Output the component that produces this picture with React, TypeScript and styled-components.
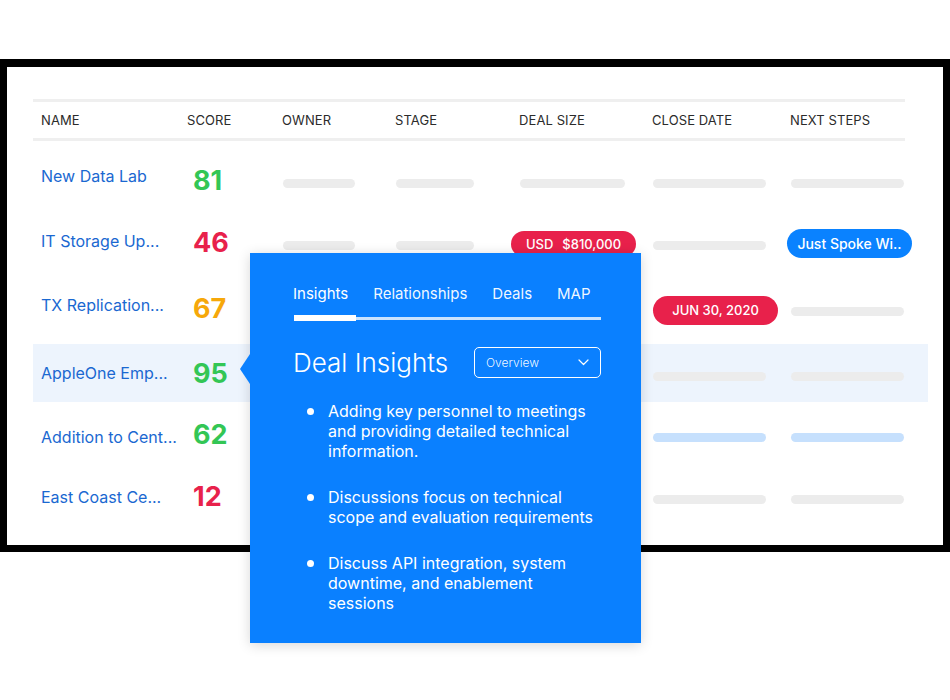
import React from "react";
import styled, { createGlobalStyle } from "styled-components";

const GlobalStyle = createGlobalStyle`
  body {
    margin: 0;
    background: #ffffff;
    font-family: Inter, "Noto Sans", "Liberation Sans", sans-serif;
  }
`;

const Page = styled.div`
  position: relative;
  width: 950px;
  height: 700px;
  padding-top: 59px;
  box-sizing: border-box;
`;

const Frame = styled.div`
  width: 950px;
  height: 493px;
  box-sizing: border-box;
  border: 7px solid #000;
  border-top-width: 8px;
  padding: 32px 0 0 26px;
  background: #fff;
`;

const Table = styled.div`
  width: 895px;
`;

const COLS = "146px 95px 113px 124px 133px 138px 1fr";

const HeaderRow = styled.div`
  width: 872px;
  height: 42px;
  box-sizing: border-box;
  display: grid;
  grid-template-columns: ${COLS};
  align-items: center;
  padding-left: 8px;
  border-top: 3px solid #efefef;
  border-bottom: 3px solid #efefef;
`;

const HeaderCell = styled.div`
  font-size: 13px;
  color: #2b2b2b;
  letter-spacing: 0.1px;
`;

const Body = styled.div`
  margin-top: 8px;
  display: flex;
  flex-direction: column;
`;

const Row = styled.div<{ $h: number; $active?: boolean }>`
  height: ${(p) => p.$h}px;
  display: grid;
  grid-template-columns: ${COLS};
  align-items: center;
  padding-left: 8px;
  background: ${(p) => (p.$active ? "#edf4fd" : "transparent")};
`;

const Cell = styled.div`
  display: flex;
  align-items: center;
`;

const Name = styled.span<{ $lift: number }>`
  margin-top: ${(p) => -p.$lift}px;
  font-size: 16px;
  color: #1a68d1;
  white-space: nowrap;
`;

const Score = styled.span<{ $color: string }>`
  padding-left: 6px;
  font-size: 27px;
  font-weight: 700;
  color: ${(p) => p.$color};
`;

const Bar = styled.div<{ $w: number; $blue?: boolean }>`
  width: ${(p) => p.$w}px;
  height: 9px;
  margin: 6px 0 0 1px;
  border-radius: 5px;
  background: ${(p) => (p.$blue ? "#c6e0fd" : "#ececec")};
`;

const Pill = styled.div<{ $tone: "red" | "blue"; $shift: number; $h: number }>`
  width: 125px;
  height: ${(p) => p.$h}px;
  margin-left: ${(p) => p.$shift}px;
  margin-top: 3px;
  border-radius: 15px;
  background: ${(p) => (p.$tone === "red" ? "#e8214b" : "#0a82ff")};
  color: #fff;
  display: flex;
  align-items: center;
  justify-content: center;
  gap: 9px;
  font-size: 13px;
  font-weight: 500;
  white-space: nowrap;
`;

const BigPill = styled(Pill)`
  font-size: 14px;
`;

const Popup = styled.div`
  position: absolute;
  left: 250px;
  top: 253px;
  width: 391px;
  height: 390px;
  box-sizing: border-box;
  padding: 30px 40px 0 43px;
  background: #0a80ff;
  color: #fff;
  box-shadow: 0 2px 12px rgba(0, 0, 0, 0.16);

  &::before {
    content: "";
    position: absolute;
    left: -10px;
    top: 101px;
    border-top: 15px solid transparent;
    border-bottom: 15px solid transparent;
    border-right: 10px solid #0a80ff;
  }
`;

const Tabs = styled.div`
  display: flex;
  gap: 25px;
  height: 21px;
  align-items: center;
`;

const Tab = styled.span<{ $active?: boolean }>`
  font-size: 15px;
  line-height: 20px;
  color: ${(p) => (p.$active ? "#fff" : "rgba(255,255,255,0.95)")};
`;

const Underline = styled.div`
  margin-top: 11px;
  height: 6px;
  display: flex;
  align-items: center;
  padding-left: 1px;
`;

const ActiveMark = styled.div`
  width: 62px;
  height: 6px;
  background: #fff;
`;

const Track = styled.div`
  flex: 1;
  height: 3px;
  background: rgba(255, 255, 255, 0.78);
`;

const TitleRow = styled.div`
  margin-top: 26px;
  height: 31px;
  display: flex;
  align-items: center;
  justify-content: space-between;
`;

const Title = styled.h2`
  margin: 0;
  font-size: 26px;
  font-weight: 300;
  line-height: 31px;
`;

const Dropdown = styled.div`
  width: 127px;
  height: 31px;
  box-sizing: border-box;
  border: 1px solid #fff;
  border-radius: 5px;
  padding: 0 11px 0 11px;
  display: flex;
  align-items: center;
  justify-content: space-between;
  font-size: 12px;
  font-weight: 300;
  color: rgba(255, 255, 255, 0.95);
`;

const List = styled.ul`
  margin: 23px 0 0;
  padding: 0;
  list-style: none;
  display: flex;
  flex-direction: column;
  gap: 26px;
`;

const Item = styled.li`
  display: flex;
  align-items: flex-start;
  font-size: 16px;
  line-height: 20px;
`;

const Dot = styled.span`
  flex: none;
  width: 7px;
  height: 7px;
  margin: 7px 14px 0 14px;
  border-radius: 50%;
  background: #fff;
`;

type Deal = {
  name: string;
  score: number;
  color: string;
  h: number;
  lift: number;
  active?: boolean;
  blue?: boolean;
  dealPill?: boolean;
  datePill?: string;
  nextPill?: string;
};

const deals: Deal[] = [
  { name: "New Data Lab", score: 81, color: "#33c655", h: 62, lift: 8 },
  { name: "IT Storage Up...", score: 46, color: "#e8214b", h: 62, lift: 2, dealPill: true, nextPill: "Just Spoke Wi.." },
  { name: "TX Replication...", score: 67, color: "#f6a80a", h: 71, lift: 8, datePill: "JUN 30, 2020" },
  { name: "AppleOne Emp...", score: 95, color: "#33c655", h: 58, lift: 0, active: true },
  { name: "Addition to Cent...", score: 62, color: "#33c655", h: 64, lift: -5, blue: true },
  { name: "East Coast Ce...", score: 12, color: "#e8214b", h: 60, lift: -1 },
];

const headers = ["NAME", "SCORE", "OWNER", "STAGE", "DEAL SIZE", "CLOSE DATE", "NEXT STEPS"];

const insights = [
  ["Adding key personnel to meetings", "and providing detailed technical", "information."],
  ["Discussions focus on technical", "scope and evaluation requirements"],
  ["Discuss API integration, system", "downtime, and enablement", "sessions"],
];

const Chevron = () => (
  <svg width="11" height="7" viewBox="0 0 11 7" fill="none">
    <path d="M1 1l4.5 4.5L10 1" stroke="#fff" strokeWidth="1.2" strokeLinecap="round" strokeLinejoin="round" />
  </svg>
);

export default function App() {
  return (
    <Page>
      <GlobalStyle />
      <Frame>
        <Table>
          <HeaderRow>
            {headers.map((h) => (
              <HeaderCell key={h}>{h}</HeaderCell>
            ))}
          </HeaderRow>
          <Body>
            {deals.map((d) => (
              <Row key={d.name} $h={d.h} $active={d.active}>
                <Cell>
                  <Name $lift={d.lift}>{d.name}</Name>
                </Cell>
                <Cell>
                  <Score $color={d.color}>{d.score}</Score>
                </Cell>
                <Cell>
                  <Bar $w={72} />
                </Cell>
                <Cell>
                  <Bar $w={78} />
                </Cell>
                <Cell>
                  {d.dealPill ? (
                    <Pill $tone="red" $shift={-8} $h={26}>
                      <span>USD</span>
                      <span>$810,000</span>
                    </Pill>
                  ) : (
                    <Bar $w={105} />
                  )}
                </Cell>
                <Cell>
                  {d.datePill ? (
                    <Pill $tone="red" $shift={1} $h={29}>
                      {d.datePill}
                    </Pill>
                  ) : (
                    <Bar $w={113} $blue={d.blue} />
                  )}
                </Cell>
                <Cell>
                  {d.nextPill ? (
                    <BigPill $tone="blue" $shift={-3} $h={29}>
                      {d.nextPill}
                    </BigPill>
                  ) : (
                    <Bar $w={113} $blue={d.blue} />
                  )}
                </Cell>
              </Row>
            ))}
          </Body>
        </Table>
      </Frame>

      <Popup>
        <Tabs>
          <Tab $active>Insights</Tab>
          <Tab>Relationships</Tab>
          <Tab>Deals</Tab>
          <Tab>MAP</Tab>
        </Tabs>
        <Underline>
          <ActiveMark />
          <Track />
        </Underline>
        <TitleRow>
          <Title>Deal Insights</Title>
          <Dropdown>
            <span>Overview</span>
            <Chevron />
          </Dropdown>
        </TitleRow>
        <List>
          {insights.map((lines, i) => (
            <Item key={i}>
              <Dot />
              <span>
                {lines.map((l, j) => (
                  <React.Fragment key={j}>
                    {j > 0 && <br />}
                    {l}
                  </React.Fragment>
                ))}
              </span>
            </Item>
          ))}
        </List>
      </Popup>
    </Page>
  );
}
